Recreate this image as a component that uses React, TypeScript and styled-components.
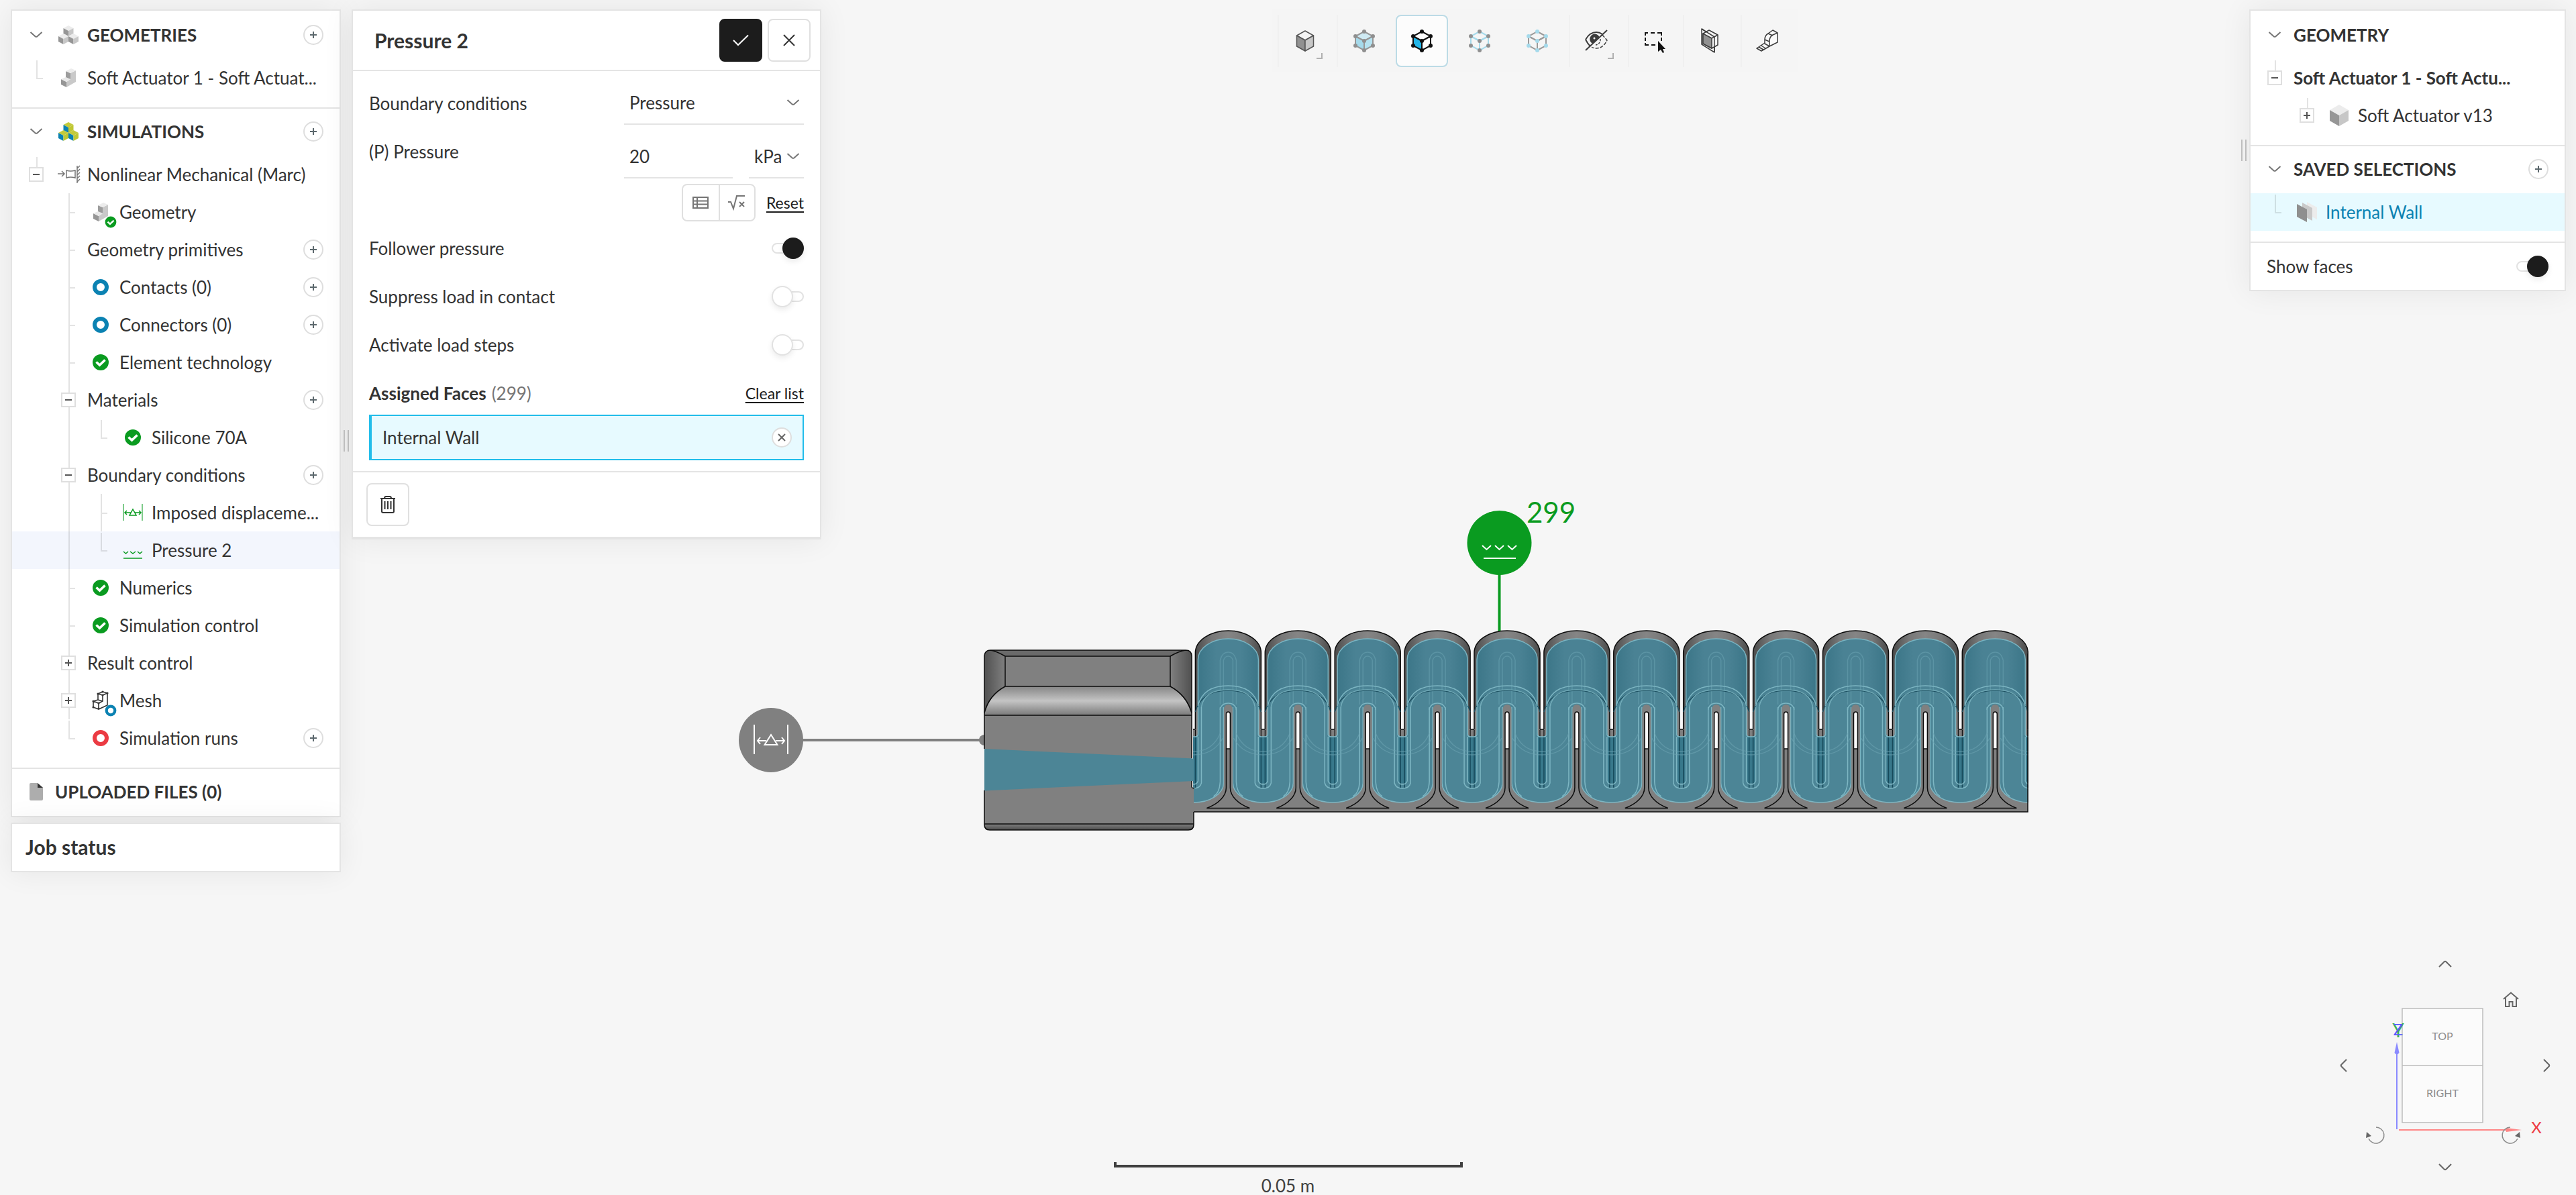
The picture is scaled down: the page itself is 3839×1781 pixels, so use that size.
import React from "react";
import styled, { createGlobalStyle, css } from "styled-components";

/* ---------- tokens ---------- */

const color = {
  canvas: "#f6f6f6",
  panel: "#ffffff",
  line: "#e4e4e4",
  text: "#333333",
  muted: "#757575",
  ink: "#1c1c1c",
  blue: "#0b82b2",
  sky: "#22bdea",
  skyLight: "#e7faff",
  green: "#0a9b20",
  red: "#eb3b43",
};

const GlobalStyle = createGlobalStyle`
  *, *::before, *::after { box-sizing: border-box; }
  body {
    margin: 0;
    background: ${color.canvas};
    color: ${color.text};
    font-family: Lato, "Open Sans", sans-serif;
    font-size: 26px;
    line-height: 32px;
  }
  button, input, select {
    font: inherit;
    color: inherit;
    margin: 0;
    padding: 0;
    border: 0;
    background: none;
  }
  ul { list-style: none; margin: 0; padding: 0; }
  svg { display: block; flex: none; }
`;

/* ---------- page layout ---------- */

const Page = styled.div`
  position: relative;
  min-height: 100vh;
  display: flex;
  flex-direction: column;
  justify-content: space-between;
`;

const Viewport = styled.svg`
  position: absolute;
  inset: 0;
  width: 100%;
  height: 100%;
`;

const TopArea = styled.div`
  position: relative;
  display: flex;
  align-items: flex-start;
  padding: 14px 15px 0 16px;
`;

const BottomArea = styled.div`
  position: relative;
  display: grid;
  grid-template-columns: 1fr auto 1fr;
  align-items: end;
`;

const Dock = styled.div<{ $width: number }>`
  display: flex;
  align-items: center;
  width: ${(p) => p.$width}px;
  flex: none;
`;

const DockColumn = styled.div`
  flex: 1;
  min-width: 0;
  display: flex;
  flex-direction: column;
  gap: 8px;
`;

const Panel = styled.section<{ $thick?: boolean }>`
  background: ${color.panel};
  border: 2px solid ${color.line};
  border-bottom-width: ${(p) => (p.$thick ? 4 : 2)}px;
  box-shadow: 0 0 44px rgba(0, 0, 0, 0.07);
`;

const GripHandle = styled.div<{ $side: "left" | "right" }>`
  flex: none;
  width: 8px;
  height: 32px;
  margin: ${(p) => (p.$side === "left" ? "0 4px" : "0 4px 0 0")};
  border: solid #c2c2c2;
  border-width: 0 2px;
`;

const ToolbarArea = styled.div`
  flex: 1;
  display: flex;
  justify-content: center;
  padding-left: 12px;
`;

/* ---------- tree ---------- */

type Line = "none" | "pass" | "tee" | "end" | "stub";

const Section = styled.div`
  padding-bottom: 16px;
  & + & { border-top: 2px solid ${color.line}; }
`;

const SectionHeader = styled.header<{ $first?: boolean }>`
  display: flex;
  align-items: center;
  height: ${(p) => (p.$first ? 72 : 70)}px;
  padding: ${(p) => (p.$first ? "0 24px 0 12px" : "0 24px 2px 12px")};
  font-weight: 700;
`;

const HeaderTitle = styled.h2`
  flex: 1;
  margin: 0;
  padding-left: 4px;
  font-size: 26px;
  line-height: 32px;
  font-weight: 700;
`;

const Row = styled.li<{ $tone?: "selected" | "active" }>`
  display: flex;
  align-items: center;
  height: 56px;
  padding: 0 24px 0 12px;
  white-space: nowrap;
  ${(p) => p.$tone === "selected" && css`background: #f3f6fd;`}
  ${(p) => p.$tone === "active" && css`background: ${color.skyLight}; color: ${color.blue};`}
`;

const RowLabel = styled.span<{ $bold?: boolean }>`
  flex: 1;
  padding-left: 4px;
  font-weight: ${(p) => (p.$bold ? 700 : 400)};
`;

const stroke = "linear-gradient(rgba(0,0,0,.11), rgba(0,0,0,.11))";
const lineStyles: Record<Line, ReturnType<typeof css> | null> = {
  none: null,
  pass: css`background: ${stroke} 24px 0 / 2px 100% no-repeat;`,
  tee: css`background: ${stroke} 24px 0 / 2px 100% no-repeat, ${stroke} 26px 28px / 8px 2px no-repeat;`,
  end: css`background: ${stroke} 24px 2px / 2px 28px no-repeat, ${stroke} 26px 28px / 8px 2px no-repeat;`,
  stub: css`background: ${stroke} 24px 2px / 2px 16px no-repeat;`,
};

const Cell = styled.span<{ $line?: Line }>`
  flex: none;
  display: flex;
  align-items: center;
  justify-content: center;
  width: 48px;
  height: 100%;
  ${(p) => lineStyles[p.$line ?? "none"]}
`;

const Expander = styled.button`
  display: grid;
  place-items: center;
  width: 22px;
  height: 22px;
  border: 2px solid #dfdfdf;
  background: ${color.panel};
`;

const ChevronButton = styled.button`
  display: grid;
  place-items: center;
  width: 32px;
  height: 32px;
`;

const RoundButton = styled.button`
  flex: none;
  display: grid;
  place-items: center;
  width: 30px;
  height: 30px;
  border: 2px solid #dedede;
  border-radius: 50%;
  background: ${color.panel};
`;

/* ---------- icons ---------- */

const Chevron = () => (
  <svg width="20" height="12" viewBox="0 0 20 12" fill="none" stroke="#757575" strokeWidth="2">
    <path d="M1.5 2 L8.5 8.2 Q10 9.4 11.5 8.2 L18.5 2" />
  </svg>
);
const Plus = ({ c = "#5c686d" }: { c?: string }) => (
  <svg width="10" height="10" viewBox="0 0 10 10" stroke={c} strokeWidth="2">
    <path d="M5 0V10M0 5H10" />
  </svg>
);
const Minus = () => (
  <svg width="10" height="10" viewBox="0 0 10 10" stroke="#555" strokeWidth="2">
    <path d="M0 5H10" />
  </svg>
);

type CubeProps = { x: number; y: number; w: number; h: number; top: string; left: string; right: string };
const IsoCube = ({ x, y, w, h, top, left, right }: CubeProps) => (
  <g transform={`translate(${x} ${y})`}>
    <path d={`M0 ${-h}L${w} ${-h / 2}L0 0L${-w} ${-h / 2}Z`} fill={top} />
    <path d={`M${-w} ${-h / 2}L0 0V${h}L${-w} ${h / 2}Z`} fill={left} />
    <path d={`M${w} ${-h / 2}L0 0V${h}L${w} ${h / 2}Z`} fill={right} />
  </g>
);

const TreeSvg = ({ children }: { children: React.ReactNode }) => (
  <svg width="48" height="48" viewBox="-24 -24 48 48" fill="none">
    {children}
  </svg>
);

const cubePalette = {
  grey: { top: "#ececec", left: "#969696", right: "#c7c7c7" },
  lime: { top: "#c3ca3b", left: "#0b82b2", right: "#bfc733" },
};

const CubeStack = ({ tone }: { tone: "grey" | "lime" }) => (
  <TreeSvg>
    <IsoCube x={0} y={-6} w={7.5} h={8} {...cubePalette[tone]} />
    <IsoCube x={-7.5} y={6} w={7.5} h={8} {...cubePalette[tone]} />
    <IsoCube x={7.5} y={6} w={7.5} h={8} {...cubePalette[tone]} />
  </TreeSvg>
);

const Check = ({ x = 0, y = 0, s = 1 }: { x?: number; y?: number; s?: number }) => (
  <g transform={`translate(${x} ${y}) scale(${s})`}>
    <circle r="12" fill={color.green} />
    <path d="M-6.5 -0.5 L-1.5 4 L6.5 -3.5" stroke="#fff" strokeWidth="3.6" />
  </g>
);
const Ring = ({ c, x = 0, y = 0, s = 1 }: { c: string; x?: number; y?: number; s?: number }) => (
  <circle cx={x} cy={y} r={9 * s} stroke={c} strokeWidth={6 * s} fill="#fff" />
);

const PartShape = () => (
  <g transform="translate(-14 -14)">
    <path d="M11 28V20L17 16V7L25 3V20Z" fill="#c9c9c9" />
    <path d="M3 16L11 20V28L3 24Z" fill="#969696" />
    <path d="M3 16L10 13L17 16L11 20Z" fill="#e8e8e8" />
    <path d="M10 4L17 7V16L10 13Z" fill="#9c9c9c" />
    <path d="M10 4L18 0L25 3L17 7Z" fill="#ececec" />
  </g>
);

const icons = {
  part: <TreeSvg><PartShape /></TreeSvg>,
  partOk: <TreeSvg><PartShape /><Check x={15} y={15} s={0.7} /></TreeSvg>,
  ok: <TreeSvg><Check /></TreeSvg>,
  ringBlue: <TreeSvg><Ring c={color.blue} /></TreeSvg>,
  ringRed: <TreeSvg><Ring c={color.red} /></TreeSvg>,
  mechanical: (
    <TreeSvg>
      <g stroke="#757575" strokeWidth="1.5">
        <path d="M-16 -1H-6M-10 -5L-6 -1L-10 3" />
        <path d="M-3 -6Q3 -4 10 -6V5Q3 3 -3 5Z" />
        <path d="M13 -13V13M17 -13L13 -9M17 -8L13 -4M17 -3L13 1M17 2L13 6M17 7L13 11" />
      </g>
    </TreeSvg>
  ),
  mesh: (
    <TreeSvg>
      <g stroke="#333" strokeWidth="1.6" strokeLinejoin="round">
        <path d="M-11 1L-3 4V13L-11 10ZM-11 1L-4 -1L3 1L-3 4M-4 -10L3 -8V1M-4 -10V-1M-4 -10L3 -13L10 -11L3 -8M10 -11V7L-3 13" />
      </g>
      <g fill="#333">
        {[[-11, 1], [-3, 4], [-4, -10], [3, -13], [10, -11], [3, -8], [-3, 12], [-11, 10]].map(([x, y]) => (
          <circle key={`${x},${y}`} cx={x} cy={y} r="1.6" />
        ))}
      </g>
      <Ring c={color.blue} x={15} y={15} s={0.7} />
    </TreeSvg>
  ),
  displacement: (
    <TreeSvg>
      <path d="M-14 -13V12M14 -13V12" stroke="#7fcb8b" strokeWidth="2" />
      <path d="M-5 4L0 -5L5 4ZM-12 0H-3M12 0H3M-9 -3L-12 0L-9 3M9 -3L12 0L9 3" stroke={color.green} strokeWidth="1.5" />
    </TreeSvg>
  ),
  pressure: (
    <TreeSvg>
      <path d="M-14 2L-10.5 5L-7 2M-4 2L0 5L4 2M7 2L10.5 5L14 2M-14 12H14" stroke={color.green} strokeWidth="1.5" />
    </TreeSvg>
  ),
  cube: (
    <TreeSvg>
      <IsoCube x={0} y={0} w={14} h={16} {...cubePalette.grey} />
    </TreeSvg>
  ),
  faces: (
    <TreeSvg>
      <path d="M0 -15L15 -7V11L0 3Z" fill="#ececec" />
      <path d="M-7 -14L8 -6V13L-7 5Z" fill="#c9c9c9" />
      <path d="M-15 -12L0 -4V15L-15 7Z" fill="#8f8f8f" />
    </TreeSvg>
  ),
  file: (
    <TreeSvg>
      <path d="M-8 -13H2L10 -6V11Q10 13 8 13H-8Q-10 13 -10 11V-11Q-10 -13 -8 -13Z" fill="#adadad" />
      <path d="M2 -13L10 -6H2Z" fill="#333" />
    </TreeSvg>
  ),
};

/* ---------- tree data ---------- */

type Node = {
  label: string;
  lines: Line[];
  expander?: "plus" | "minus";
  icon?: keyof typeof icons;
  add?: boolean;
  bold?: boolean;
  tone?: "selected" | "active";
};

const geometries: Node[] = [
  { label: "Soft Actuator 1 - Soft Actuat...", lines: ["end"], icon: "part" },
];

const simulations: Node[] = [
  { label: "Nonlinear Mechanical (Marc)", lines: ["stub"], expander: "minus", icon: "mechanical" },
  { label: "Geometry", lines: ["none", "tee"], icon: "partOk" },
  { label: "Geometry primitives", lines: ["none", "tee"], add: true },
  { label: "Contacts (0)", lines: ["none", "tee"], icon: "ringBlue", add: true },
  { label: "Connectors (0)", lines: ["none", "tee"], icon: "ringBlue", add: true },
  { label: "Element technology", lines: ["none", "tee"], icon: "ok" },
  { label: "Materials", lines: ["none", "pass"], expander: "minus", add: true },
  { label: "Silicone 70A", lines: ["none", "pass", "end"], icon: "ok" },
  { label: "Boundary conditions", lines: ["none", "pass"], expander: "minus", add: true },
  { label: "Imposed displaceme...", lines: ["none", "pass", "tee"], icon: "displacement" },
  { label: "Pressure 2", lines: ["none", "pass", "end"], icon: "pressure", tone: "selected" },
  { label: "Numerics", lines: ["none", "tee"], icon: "ok" },
  { label: "Simulation control", lines: ["none", "tee"], icon: "ok" },
  { label: "Result control", lines: ["none", "pass"], expander: "plus" },
  { label: "Mesh", lines: ["none", "pass"], expander: "plus", icon: "mesh" },
  { label: "Simulation runs", lines: ["none", "end"], icon: "ringRed", add: true },
];

const geometryTree: Node[] = [
  { label: "Soft Actuator 1 - Soft Actu...", lines: ["stub"], expander: "minus", bold: true },
  { label: "Soft Actuator v13", lines: ["none", "stub"], expander: "plus", icon: "cube" },
];

const selections: Node[] = [
  { label: "Internal Wall", lines: ["end"], icon: "faces", tone: "active" },
];

const Tree = ({ nodes }: { nodes: Node[] }) => (
  <ul>
    {nodes.map((n) => (
      <Row key={n.label} $tone={n.tone}>
        {n.lines.map((line, i) => (
          <Cell key={i} $line={line}>
            {n.expander && i === n.lines.length - 1 && (
              <Expander aria-label={`Toggle ${n.label}`}>
                {n.expander === "plus" ? <Plus c="#555" /> : <Minus />}
              </Expander>
            )}
          </Cell>
        ))}
        {n.icon && <Cell>{icons[n.icon]}</Cell>}
        <RowLabel $bold={n.bold}>{n.label}</RowLabel>
        {n.add && (
          <RoundButton aria-label={`Add to ${n.label}`}>
            <Plus />
          </RoundButton>
        )}
      </Row>
    ))}
  </ul>
);

type HeaderProps = { title: string; icon?: React.ReactNode; add?: boolean; first?: boolean };
const TreeHeader = ({ title, icon, add, first }: HeaderProps) => (
  <SectionHeader $first={first}>
    <Cell>
      <ChevronButton aria-label={`Collapse ${title}`}>
        <Chevron />
      </ChevronButton>
    </Cell>
    {icon && <Cell>{icon}</Cell>}
    <HeaderTitle>{title}</HeaderTitle>
    {add && (
      <RoundButton aria-label={`Add to ${title}`}>
        <Plus />
      </RoundButton>
    )}
  </SectionHeader>
);

const FilesRow = styled.div`
  display: flex;
  align-items: center;
  height: 72px;
  padding: 0 24px 2px 12px;
  border-top: 2px solid ${color.line};
`;

const ShowFaces = styled.div`
  border-top: 2px solid ${color.line};
`;

const JobPanel = styled(Panel)`
  padding: 10px 20px 12px;
`;

const PanelTitle = styled.h1`
  margin: 0;
  font-size: 30px;
  line-height: 48px;
  font-weight: 700;
`;

/* ---------- settings panel ---------- */

const EditPanel = styled(Panel)`
  flex: none;
  width: 700px;
`;

const EditHeader = styled.header`
  display: flex;
  align-items: center;
  justify-content: space-between;
  height: 90px;
  padding: 0 14px 0 32px;
  border-bottom: 2px solid ${color.line};
`;

const ButtonRow = styled.div`
  display: flex;
  gap: 8px;
`;

const SquareButton = styled.button<{ $dark?: boolean }>`
  display: grid;
  place-items: center;
  width: 64px;
  height: 64px;
  border-radius: 8px;
  border: 2px solid ${(p) => (p.$dark ? color.ink : "#e0e0e0")};
  background: ${(p) => (p.$dark ? color.ink : color.panel)};
`;

const EditBody = styled.div`
  padding: 16px 24px;
`;

const Field = styled.div`
  display: grid;
  grid-template-columns: 1fr 268px;
  margin-bottom: 16px;
`;

const FieldLabel = styled.label<{ $top?: boolean }>`
  line-height: ${(p) => (p.$top ? 48 : 64)}px;
`;

const FieldControls = styled.div`
  display: flex;
  gap: 24px;
`;

const TextBox = styled.input`
  flex: 1;
  min-width: 0;
  height: 64px;
  padding: 0 8px;
  border-bottom: 2px solid ${color.line};
`;

const SelectBox = styled.div<{ $grow?: boolean }>`
  display: grid;
  align-items: center;
  flex: ${(p) => (p.$grow ? "1" : "0 0 82px")};
  height: 64px;
  border-bottom: 2px solid ${color.line};
  & > * { grid-area: 1 / 1; }
  & > svg { justify-self: end; margin-right: 6px; pointer-events: none; }
`;

const Select = styled.select`
  appearance: none;
  width: 100%;
  height: 62px;
  padding: 0 8px;
`;

const FieldTools = styled.div`
  display: flex;
  align-items: center;
  justify-content: flex-end;
  gap: 16px;
  margin: -8px 0 4px;
`;

const Segmented = styled.div`
  display: flex;
  border: 2px solid #e0e0e0;
  border-radius: 8px;
`;

const Segment = styled.button`
  display: grid;
  place-items: center;
  width: 53px;
  height: 52px;
  & + & { border-left: 2px solid #e0e0e0; }
`;

const TextButton = styled.button`
  font-size: 23px;
  line-height: 28px;
  text-decoration: underline;
  text-decoration-thickness: 2px;
  text-underline-offset: 4px;
  color: ${color.ink};
`;

const ToggleRow = styled.label<{ $inset?: boolean }>`
  display: flex;
  align-items: center;
  justify-content: space-between;
  height: ${(p) => (p.$inset ? 70 : 72)}px;
  padding: ${(p) => (p.$inset ? "0 24px" : "0")};
`;

const Switch = styled.input`
  appearance: none;
  flex: none;
  display: grid;
  align-items: center;
  width: 48px;
  height: 32px;
  &::before, &::after {
    content: "";
    grid-area: 1 / 1;
    border: 2px solid #e2e2e2;
  }
  &::before { height: 16px; border-radius: 8px; }
  &::after {
    width: 32px;
    height: 32px;
    border-radius: 50%;
    background: ${color.panel};
    box-shadow: 0 4px 8px rgba(0, 0, 0, 0.08);
  }
  &:checked::after {
    justify-self: end;
    background: ${color.ink};
    border-color: ${color.ink};
  }
`;

const FacesHeader = styled.div`
  display: flex;
  align-items: center;
  justify-content: space-between;
  height: 68px;
  padding-top: 4px;
`;

const FacesTitle = styled.h2`
  margin: 0;
  font-size: 26px;
  line-height: 32px;
  font-weight: 700;
`;

const Count = styled.span`
  margin-left: 8px;
  font-weight: 400;
  color: ${color.muted};
`;

const FaceItem = styled.div`
  display: flex;
  align-items: center;
  justify-content: space-between;
  height: 68px;
  padding: 0 16px;
  border: 2px solid ${color.sky};
  border-left-width: 4px;
  background: ${color.skyLight};
`;

const EditFooter = styled.footer`
  padding: 16px 20px;
  border-top: 2px solid ${color.line};
`;

const SettingsPanel = () => (
  <EditPanel $thick>
    <EditHeader>
      <PanelTitle>Pressure 2</PanelTitle>
      <ButtonRow>
        <SquareButton $dark aria-label="Apply">
          <svg width="24" height="18" viewBox="0 0 24 18" fill="none" stroke="#fff" strokeWidth="2">
            <path d="M1 9L8 16L23 1.5" />
          </svg>
        </SquareButton>
        <SquareButton aria-label="Close">
          <svg width="18" height="18" viewBox="0 0 18 18" stroke="#333" strokeWidth="2">
            <path d="M1 1L17 17M17 1L1 17" />
          </svg>
        </SquareButton>
      </ButtonRow>
    </EditHeader>
    <EditBody>
      <Field>
        <FieldLabel htmlFor="bc">Boundary conditions</FieldLabel>
        <SelectBox $grow>
          <Select id="bc" defaultValue="Pressure">
            <option>Pressure</option>
          </Select>
          <Chevron />
        </SelectBox>
      </Field>
      <Field>
        <FieldLabel htmlFor="pressure" $top>(P) Pressure</FieldLabel>
        <FieldControls>
          <TextBox id="pressure" defaultValue="20" />
          <SelectBox>
            <Select aria-label="Unit" defaultValue="kPa">
              <option>kPa</option>
            </Select>
            <Chevron />
          </SelectBox>
        </FieldControls>
      </Field>
      <FieldTools>
        <Segmented>
          <Segment aria-label="Table input">
            <svg width="24" height="20" viewBox="0 0 24 20" fill="none" stroke="#757575" strokeWidth="2">
              <path d="M1 2H23V18H1ZM7 2V18M1 7.5H23M1 12.5H23" />
            </svg>
          </Segment>
          <Segment aria-label="Formula input">
            <svg width="26" height="24" viewBox="0 0 26 24" fill="none" stroke="#757575" strokeWidth="2">
              <path d="M0 11H4L8 21L13 2H25M17 11L24 18M24 11L17 18" />
            </svg>
          </Segment>
        </Segmented>
        <TextButton>Reset</TextButton>
      </FieldTools>
      <ToggleRow>
        Follower pressure
        <Switch type="checkbox" defaultChecked />
      </ToggleRow>
      <ToggleRow>
        Suppress load in contact
        <Switch type="checkbox" />
      </ToggleRow>
      <ToggleRow>
        Activate load steps
        <Switch type="checkbox" />
      </ToggleRow>
      <FacesHeader>
        <FacesTitle>
          Assigned Faces<Count>(299)</Count>
        </FacesTitle>
        <TextButton>Clear list</TextButton>
      </FacesHeader>
      <FaceItem>
        Internal Wall
        <RoundButton aria-label="Remove Internal Wall">
          <svg width="12" height="12" viewBox="0 0 12 12" stroke="#666" strokeWidth="2">
            <path d="M1 1L11 11M11 1L1 11" />
          </svg>
        </RoundButton>
      </FaceItem>
    </EditBody>
    <EditFooter>
      <SquareButton aria-label="Delete">
        <svg width="24" height="28" viewBox="0 0 24 28" fill="none" stroke="#333" strokeWidth="2">
          <path d="M1 5H23M7 5Q7 2 9 2H15Q17 2 17 5M3 5V24Q3 26 5 26H19Q21 26 21 24V5M7.5 9V21M12 9V21M16.5 9V21" />
        </svg>
      </SquareButton>
    </EditFooter>
  </EditPanel>
);

/* ---------- toolbar ---------- */

const Toolbar = styled.nav`
  display: flex;
  align-items: center;
  padding: 8px;
  background: #f5f5f5;
`;

const ToolGroup = styled.div`
  display: flex;
  gap: 8px;
  padding-right: 8px;
  border-left: 2px solid #f0f0f0;
  &:last-child { padding-right: 0; }
`;

const ToolButton = styled.button<{ $active?: boolean; $width?: number }>`
  display: flex;
  align-items: center;
  justify-content: center;
  width: ${(p) => p.$width ?? 78}px;
  height: 78px;
  border-radius: 8px;
  border: 2px solid transparent;
  ${(p) => p.$active && css`
    background: #fcfcfc;
    border-color: #bcdbe6;
  `}
`;

const ToolSvg = ({ children }: { children: React.ReactNode }) => (
  <svg width="64" height="64" viewBox="-32 -32 64 64" fill="none">
    {children}
  </svg>
);

const corner = <path d="M17 26H25V18" stroke="#b0b0b0" strokeWidth="2" />;

type NodeCubeProps = { edge: string; node: string; left?: string; right?: string; top?: string };
const NodeCube = ({ edge, node, left = "none", right = "none", top = "none" }: NodeCubeProps) => (
  <ToolSvg>
    <g stroke={edge} strokeWidth="2">
      <path d="M0 -14L13 -7L0 0L-13 -7Z" fill={top} />
      <path d="M-13 -7L0 0V14L-13 7Z" fill={left} />
      <path d="M13 -7L0 0V14L13 7Z" fill={right} />
    </g>
    {[[0, -14], [13, -7], [0, 0], [-13, -7], [0, 14], [-13, 7], [13, 7]].map(([x, y]) => (
      <circle key={`${x},${y}`} cx={x} cy={y} r="3" fill={node} />
    ))}
  </ToolSvg>
);

const ViewToolbar = () => (
  <Toolbar aria-label="View tools">
    <ToolGroup>
      <ToolButton aria-label="Render mode">
        <ToolSvg>
          <g stroke="#555" strokeWidth="1.5" strokeLinejoin="round">
            <path d="M0 -15L12.5 -8L0 -1L-12.5 -8Z" fill="#f4f4f4" />
            <path d="M-12.5 -8L0 -1V15L-12.5 8Z" fill="#919191" />
            <path d="M12.5 -8L0 -1V15L12.5 8Z" fill="#c7c7c7" />
          </g>
          {corner}
        </ToolSvg>
      </ToolButton>
    </ToolGroup>
    <ToolGroup>
      <ToolButton aria-label="Select bodies">
        <NodeCube edge="#969696" node="#8f8f8f" left="#a5daeb" right="#b5e2f0" top="#cfeaf3" />
      </ToolButton>
      <ToolButton aria-label="Select faces" $active>
        <NodeCube edge="#111" node="#111" left="#22b5e8" right="#fff" top="#fff" />
      </ToolButton>
      <ToolButton aria-label="Select edges">
        <NodeCube edge="#a5daeb" node="#8f8f8f" />
      </ToolButton>
      <ToolButton aria-label="Select vertices">
        <NodeCube edge="#9a9a9a" node="#a5daeb" />
      </ToolButton>
    </ToolGroup>
    <ToolGroup>
      <ToolButton aria-label="Hide selection">
        <ToolSvg>
          <path d="M-16 -2Q-10 -13 0 -13Q5 -13 9 -10M-16 -2Q-13 4 -9 8" stroke="#3c3c3c" strokeWidth="2" />
          <path d="M9 -9L16 -1Q10 11 0 11Q-4 11 -7 9" stroke="#3c3c3c" strokeWidth="1.5" strokeDasharray="5 2" />
          <path d="M6 -3Q6 5 -1 6" stroke="#3c3c3c" strokeWidth="1.5" strokeDasharray="3 2" />
          <path d="M-5.5 4A7.5 7.5 0 1 1 4.5 -6Z" fill="#3c3c3c" />
          <circle cx="-3" cy="-4" r="1.5" fill="#fff" />
          <path d="M-16 14L16 -16" stroke="#3c3c3c" strokeWidth="2" />
          {corner}
        </ToolSvg>
      </ToolButton>
    </ToolGroup>
    <ToolGroup>
      <ToolButton aria-label="Box selection" $width={72}>
        <ToolSvg>
          <path d="M-12 -8V-12H-8M-4 -12H2M6 -12H12V-8M-12 -5V0M-12 3V6H-7M-3 6H3M12 -5V0" stroke="#111" strokeWidth="2" />
          <path d="M7 0V16L11 13L14 18L16 17L14 12H18Z" fill="#111" />
        </ToolSvg>
      </ToolButton>
    </ToolGroup>
    <ToolGroup>
      <ToolButton aria-label="Clipping plane" $width={76}>
        <ToolSvg>
          <g stroke="#3c3c3c" strokeWidth="1.5" strokeLinejoin="round">
            <path d="M-12 -18L7 -6V17L-12 5Z" />
            <path d="M-10 -11L-1 -16L12 -9V6L3 11L-10 4Z" fill="#f4f4f4" />
            <path d="M-10 -11L3 -4V11L-10 4Z" fill="#919191" />
            <path d="M3 -4L12 -9" />
            <path d="M-12 -18L7 -6V17" />
          </g>
        </ToolSvg>
      </ToolButton>
    </ToolGroup>
    <ToolGroup>
      <ToolButton aria-label="Measure" $width={76}>
        <ToolSvg>
          <g stroke="#3c3c3c" strokeWidth="1.5" strokeLinejoin="round">
            <path d="M-4 4V-2Q-4 -8 1 -11L8 -16L15 -12V2L3 8L-4 4Z" fill="#fafafa" />
            <path d="M3 8V0Q3 -6 8 -9L15 -12M-4 -2L3 1M1 -11L8 -8" />
            <path d="M-4 3L-16 11L-9 15L3 8M-13 9L-6 13M-9 7L-3 11" />
          </g>
        </ToolSvg>
      </ToolButton>
    </ToolGroup>
  </Toolbar>
);

/* ---------- 3D scene ---------- */

const BELLOWS = 12;
const PITCH = 103.9;
const FIRST = 1830.4;
const bellows = Array.from({ length: BELLOWS }, (_, i) => FIRST + i * PITCH);
const gaps = Array.from({ length: BELLOWS + 1 }, (_, i) => FIRST + (i - 0.5) * PITCH);

const Lobe = ({ x }: { x: number }) => (
  <g transform={`translate(${x} 920)`} fill="none">
    <path d="M-49 170V53A49 33 0 0 1 49 53V170Z" fill="url(#lobeGrey)" />
    <path d="M-49 170V141Q-42 108 0 108Q42 108 49 141V170Z" fill="#808080" />
    <path d="M-49 167V53A49 33 0 0 1 49 53V167" stroke="#0c0c0c" strokeWidth="1.5" />
    <path d="M-45 134V63A45 31 0 0 1 45 63V134Z" fill="url(#lobeTeal)" />
    <path d="M-45 180V134Q-38 105 0 105Q38 105 45 134V180Z" fill="#4c8596" />
    <path d="M-45 134V63A45 31 0 0 1 45 63V134" stroke="#79b4c2" strokeWidth="1.5" />
    <g stroke="#6aa2b0" strokeOpacity="0.55" strokeWidth="1.5">
      <path d="M-12 130V64Q-9 52 0 52Q9 52 12 64V130" />
      <path d="M-7 130V64Q-5 58 0 58Q5 58 7 64V130" />
    </g>
    <path d="M-49 141Q-40 109 0 109Q40 109 49 141" stroke="#1d5061" strokeWidth="1.5" />
    <g stroke="#7db6c3" strokeWidth="1.5">
      <path d="M-45 132Q-38 102 0 102Q38 102 45 132" />
      <path d="M-40 134Q-36 108 0 108Q36 108 40 134" strokeOpacity="0.8" />
    </g>
  </g>
);

const GapShape = ({ x }: { x: number }) => (
  <g transform={`translate(${x} 920)`} fill="none">
    <path d="M-3 167H3" stroke="#0c0c0c" strokeWidth="1.5" />
    <path d="M-45 170H-7Q-6 178 -3 178H3Q6 178 7 170H45V247A45 29 0 0 1 -45 247Z" fill="#4c8596" />
    <path d="M-6 179H6V247H-6Z" fill="#38788b" />
    <path d="M-3 179V255M3 179V255" stroke="#16495a" strokeWidth="1.5" />
    <path d="M-3 168V178M3 168V178" stroke="#0c0c0c" strokeWidth="1.2" />
    <g stroke="#7db6c3" strokeWidth="1.5">
      <path d="M-7 134V175Q-6 178 -3 178H3Q6 178 7 175V134" />
      <path d="M-12 134V247Q-10 255 0 255Q10 255 12 247V134" />
      <path d="M-7 178V244Q-5 249 0 249Q5 249 7 244V178" />
      <path d="M-45 134V247A45 29 0 0 0 45 247V134" />
      <path d="M-40 134V245Q-39 262 -30 267M40 134V245Q39 262 30 267" />
    </g>
    <g stroke="#6aa2b0" strokeOpacity="0.6" strokeWidth="1.5">
      <path d="M-40 173C-32 192 -18 200 0 200C18 200 32 192 40 173" />
      <path d="M-44 180C-34 198 -18 205 0 205C18 205 34 198 44 180" />
    </g>
  </g>
);

const Slot = ({ x }: { x: number }) => (
  <g transform={`translate(${x} 920)`} fill="none">
    <path d="M-12 138V136Q-9 128 0 128Q9 128 12 136V138" stroke="#7db6c3" strokeWidth="1.5" />
    <path d="M-6.5 250V138Q-6 130 0 130Q6 130 6.5 138V250Z" fill="#808080" />
    <path d="M-3 196V144Q-3 141 0 141Q3 141 3 144V196Z" fill="#fafafa" />
    <path
      d="M-32 284.5C-14 278 -3 266 -3 254V144Q-3 141 0 141Q3 141 3 144V254C3 266 14 278 32 284.5ZM-3 196H3"
      stroke="#0c0c0c"
      strokeWidth="1.5"
    />
  </g>
);

const Scene = () => (
  <Viewport viewBox="0 0 3839 1781" preserveAspectRatio="xMidYMid meet" role="img" aria-label="Soft actuator model">
    <defs>
      <linearGradient id="lobeGrey">
        <stop offset="0" stopColor="#4a4a4a" />
        <stop offset="0.25" stopColor="#787878" />
        <stop offset="0.5" stopColor="#858585" />
        <stop offset="0.75" stopColor="#787878" />
        <stop offset="1" stopColor="#4a4a4a" />
      </linearGradient>
      <linearGradient id="lobeTeal">
        <stop offset="0" stopColor="#3c7688" />
        <stop offset="0.3" stopColor="#4a8294" />
        <stop offset="0.7" stopColor="#4a8294" />
        <stop offset="1" stopColor="#3c7688" />
      </linearGradient>
      <linearGradient id="bandShine" x2="0" y2="1">
        <stop offset="0" stopColor="#868686" />
        <stop offset="0.5" stopColor="#c4c4c4" />
        <stop offset="1" stopColor="#7a7a7a" />
      </linearGradient>
      <linearGradient id="sideLeft">
        <stop offset="0" stopColor="#505050" />
        <stop offset="1" stopColor="#808080" />
      </linearGradient>
      <linearGradient id="sideRight">
        <stop offset="0" stopColor="#808080" />
        <stop offset="1" stopColor="#505050" />
      </linearGradient>
      <linearGradient id="footShade" x2="0" y2="1">
        <stop offset="0" stopColor="#808080" />
        <stop offset="1" stopColor="#4c4c4c" />
      </linearGradient>
      <clipPath id="bodyClip">
        <rect x="1778" y="930" width="1245" height="290" />
      </clipPath>
    </defs>

    <circle cx="1467" cy="1103" r="8" fill="#808080" />
    <path d="M1149 1103H1467" stroke="#808080" strokeWidth="4" />
    <circle cx="1149" cy="1103" r="48" fill="#808080" />
    <g fill="none" stroke="#fff" strokeWidth="2">
      <path d="M1124 1080V1124M1174 1080V1124" />
      <path d="M1139.5 1110L1149 1095L1158.5 1110ZM1129 1104H1142M1156 1104H1169M1133 1099L1129 1104L1133 1109M1165 1099L1169 1104L1165 1109" />
    </g>

    <path d="M2234.5 850V942" stroke={color.green} strokeWidth="4" />

    {/* bellows body */}
    <path d="M1778 1087H3022V1210H1778Z" fill="#808080" />
    <g clipPath="url(#bodyClip)">
      {bellows.map((x) => <Lobe key={x} x={x} />)}
      {gaps.map((x) => <GapShape key={x} x={x} />)}
      {bellows.map((x) => <Slot key={x} x={x} />)}
    </g>
    <path d="M1779 1210H3022V974" fill="none" stroke="#0c0c0c" strokeWidth="1.5" />

    {/* inlet block */}
    <path d="M1467 977Q1468 969 1476 969H1768Q1776 969 1776 978V1174H1779V1230Q1778 1237 1771 1237H1475Q1467 1237 1467 1229Z" fill="#808080" />
    <path d="M1467 977Q1468 969 1476 969Q1484 970 1498 978V1023Q1474 1040 1467 1066Z" fill="url(#sideLeft)" />
    <path d="M1776 977Q1775 969 1767 969Q1758 970 1744 978V1023Q1768 1040 1776 1066Z" fill="url(#sideRight)" />
    <path d="M1476 969H1767Q1758 970 1744 978H1498Q1484 970 1476 969Z" fill="#6a6a6a" />
    <path d="M1498 1023H1744Q1768 1036 1776 1066H1467Q1474 1036 1498 1023Z" fill="url(#bandShine)" />
    <path d="M1467 1228H1779Q1779 1237 1771 1237H1475Q1467 1237 1467 1228Z" fill="url(#footShade)" />
    <path d="M1467 1116L1779 1130.5V1164L1467 1178.5Z" fill="#4c8596" />
    <g fill="none" stroke="#0c0c0c" strokeWidth="1.5">
      <path d="M1467 1116V977Q1468 969 1476 969Q1484 970 1498 978H1744Q1758 970 1767 969Q1776 969 1776 978V1130M1476 969H1767" />
      <path d="M1498 978V1023H1744V978M1498 1023Q1474 1036 1467 1062M1744 1023Q1768 1036 1776 1062M1467 1066H1776" />
      <path d="M1467 1178V1229Q1467 1237 1475 1237H1771Q1779 1237 1779 1229V1210M1467 1228H1779M1776 1164V1173Q1777 1175 1780 1175" />
    </g>

    <circle cx="2234.5" cy="809" r="48" fill={color.green} />
    <path
      d="M2209 813L2215.5 819L2222 813M2228 813L2234.5 819L2241 813M2247 813L2253.5 819L2260 813M2211 832H2259"
      fill="none"
      stroke="#fff"
      strokeWidth="2"
    />
    <text x="2275" y="779" fontSize="42" fill={color.green}>299</text>
  </Viewport>
);

/* ---------- bottom overlays ---------- */

const ScaleBar = styled.div`
  grid-column: 2;
  width: 520px;
  text-align: center;
  line-height: 28px;
  color: #404040;
  &::before {
    content: "";
    display: block;
    height: 8px;
    margin-bottom: 13px;
    background:
      linear-gradient(#404040, #404040) 0 100% / 100% 4px no-repeat,
      linear-gradient(#404040, #404040) 0 0 / 4px 8px no-repeat,
      linear-gradient(#404040, #404040) 100% 0 / 4px 8px no-repeat;
  }
`;

const Navigator = styled.div`
  grid-column: 3;
  justify-self: end;
  display: grid;
  grid-template-columns: 48px 46px 162px 46px 48px;
  grid-template-rows: 48px 46px 162px 46px 48px;
  place-items: center;
  margin: 0 20px 18px 0;
`;

const NavDrawing = styled.svg`
  grid-area: 1 / 1 / -1 / -1;
  width: 350px;
  height: 350px;
  overflow: visible;
`;

const NavButton = styled.button<{ $row: number; $col: number; $align?: string }>`
  grid-row: ${(p) => p.$row};
  grid-column: ${(p) => p.$col};
  place-self: ${(p) => p.$align ?? "center"};
  display: grid;
  place-items: center;
  width: 34px;
  height: 34px;
`;

const Arrow = ({ d }: { d: string }) => (
  <svg width="24" height="24" viewBox="0 0 24 24" fill="none" stroke="#666" strokeWidth="2">
    <path d={d} />
  </svg>
);

const ViewNavigator = () => (
  <Navigator>
    <NavDrawing viewBox="0 0 350 350" fill="none">
      <path d="M111 90H231V260H111Z" fill="#fbfbfb" stroke="#bdbdbd" strokeWidth="1.5" />
      <path d="M111 175H231" stroke="#bdbdbd" strokeWidth="1.5" />
      <text x="171" y="137" fontSize="16" textAnchor="middle" fill="#8c8c8c">TOP</text>
      <text x="171" y="222" fontSize="16" textAnchor="middle" fill="#8c8c8c">RIGHT</text>
      <path d="M103 270V152" stroke="#8a8aff" strokeWidth="2" />
      <path d="M103 140L106.5 156Q103 161 99.5 156Z" fill="#8a8aff" />
      <path d="M106 271H268" stroke="#ff8686" strokeWidth="2" />
      <path d="M289 271L266 274V268Z" fill="#ff8686" />
      <text x="105" y="133" fontSize="28" textAnchor="middle" fill="#3cb356">Y</text>
      <text x="105" y="130" fontSize="24" textAnchor="middle" fill="#5a5aff">Z</text>
      <text x="311" y="276" fontSize="24" textAnchor="middle" fill="#ee3b43">X</text>
    </NavDrawing>
    <NavButton $row={1} $col={3} aria-label="Rotate up"><Arrow d="M3 16L10.5 8.5Q12 7 13.5 8.5L21 16" /></NavButton>
    <NavButton $row={5} $col={3} aria-label="Rotate down"><Arrow d="M3 8L10.5 15.5Q12 17 13.5 15.5L21 8" /></NavButton>
    <NavButton $row={3} $col={1} aria-label="Rotate left"><Arrow d="M16 3L8.5 10.5Q7 12 8.5 13.5L16 21" /></NavButton>
    <NavButton $row={3} $col={5} aria-label="Rotate right"><Arrow d="M8 3L15.5 10.5Q17 12 15.5 13.5L8 21" /></NavButton>
    <NavButton $row={2} $col={4} $align="end start" aria-label="Home view">
      <Arrow d="M1 11L12 1.5L23 11M4 9V22H9.5V15H14.5V22H20V9" />
    </NavButton>
    <NavButton $row={4} $col={2} aria-label="Roll left">
      <svg width="30" height="28" viewBox="0 0 30 28" fill="none">
        <path d="M16 2A12 12 0 1 1 5 19" stroke="#8c8c8c" strokeWidth="1.5" />
        <path d="M2 9L9 15L1 18Z" fill="#666" />
      </svg>
    </NavButton>
    <NavButton $row={4} $col={4} $align="center start" aria-label="Roll right">
      <svg width="30" height="28" viewBox="0 0 30 28" fill="none">
        <path d="M14 2A12 12 0 1 0 25 19" stroke="#8c8c8c" strokeWidth="1.5" />
        <path d="M28 9L21 15L29 18Z" fill="#666" />
      </svg>
    </NavButton>
  </Navigator>
);

/* ---------- app ---------- */

export default function App() {
  return (
    <Page>
      <GlobalStyle />
      <Scene />
      <TopArea>
        <Dock $width={508}>
          <DockColumn>
            <Panel>
              <Section>
                <TreeHeader title="GEOMETRIES" icon={<CubeStack tone="grey" />} add first />
                <Tree nodes={geometries} />
              </Section>
              <Section>
                <TreeHeader title="SIMULATIONS" icon={<CubeStack tone="lime" />} add />
                <Tree nodes={simulations} />
              </Section>
              <FilesRow>
                <Cell>{icons.file}</Cell>
                <HeaderTitle>UPLOADED FILES (0)</HeaderTitle>
              </FilesRow>
            </Panel>
            <JobPanel>
              <PanelTitle>Job status</PanelTitle>
            </JobPanel>
          </DockColumn>
          <GripHandle $side="left" />
        </Dock>
        <SettingsPanel />
        <ToolbarArea>
          <ViewToolbar />
        </ToolbarArea>
        <Dock $width={484}>
          <GripHandle $side="right" />
          <DockColumn>
            <Panel>
              <Section>
                <TreeHeader title="GEOMETRY" first />
                <Tree nodes={geometryTree} />
              </Section>
              <Section>
                <TreeHeader title="SAVED SELECTIONS" add />
                <Tree nodes={selections} />
              </Section>
              <ShowFaces>
                <ToggleRow $inset>
                  Show faces
                  <Switch type="checkbox" defaultChecked />
                </ToggleRow>
              </ShowFaces>
            </Panel>
          </DockColumn>
        </Dock>
      </TopArea>
      <BottomArea>
        <ScaleBar>0.05 m</ScaleBar>
        <ViewNavigator />
      </BottomArea>
    </Page>
  );
}
